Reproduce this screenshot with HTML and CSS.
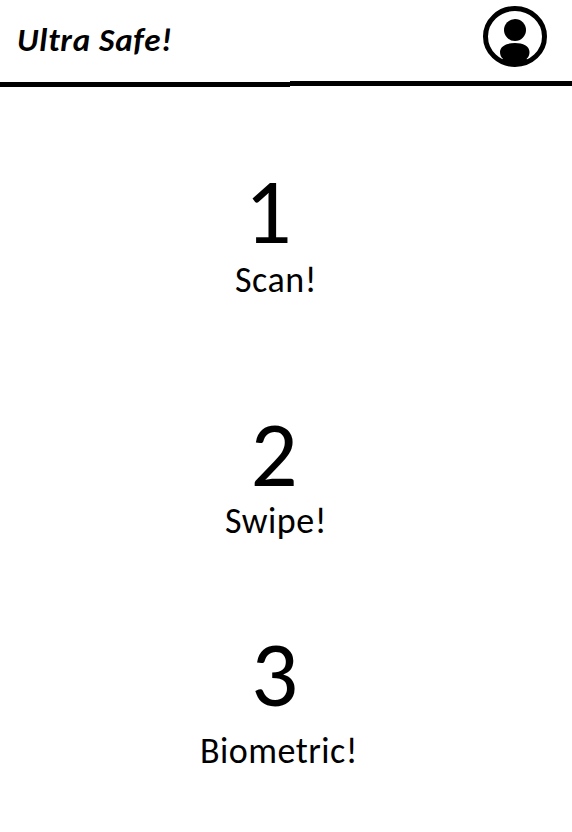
FILE: index.html
```html
<!DOCTYPE html>
<html lang="en">
<head>
<meta charset="utf-8">
<title>Ultra Safe!</title>
<link rel="stylesheet" href="styles.css">
</head>
<body>
<header class="header">
  <h1 class="brand">Ultra Safe!</h1>
  <svg class="avatar" viewBox="0 0 66 64" aria-hidden="true">
    <ellipse cx="33" cy="31.5" rx="29.5" ry="28" fill="none" stroke="#000" stroke-width="5"/>
    <circle cx="33" cy="25" r="11"/>
    <path d="M18 47C18 41 25 38 33 38S47.500 41 47.500 47C47.500 50 46.500 52 44.500 54L48 57L33 61L17 57L21 54C19 52 18 50 18 47Z"/>
  </svg>
</header>
<svg class="rule" viewBox="0 0 572 8" aria-hidden="true"><path d="M0 2H290V1H572V6H290V7H0Z"/></svg>
<main class="steps">
  <section class="step step-scan"><div class="number">1</div><div class="label">Scan!</div></section>
  <section class="step step-swipe"><div class="number">2</div><div class="label">Swipe!</div></section>
  <section class="step step-bio"><div class="number">3</div><div class="label">Biometric!</div></section>
</main>
</body>
</html>
```
FILE: styles.css
```css
* { box-sizing: border-box; }
body { margin: 0; height: 832px; overflow: hidden; background: #fff; color: #000; font-family: Carlito, Calibri, Lato, "Open Sans", sans-serif; }
.header { height: 80px; display: flex; justify-content: space-between; padding: 5px 24px 0 17px; }
.brand { margin: 15px 0 0; font-size: 33px; line-height: 40px; font-style: italic; font-weight: 700; letter-spacing: 0.75px; white-space: nowrap; }
.avatar { width: 66px; height: 64px; }
.rule { display: block; width: 572px; height: 8px; }
.step { text-align: center; }
.number { font-size: 93px; line-height: 92px; }
.label { font-size: 36px; line-height: 40px; letter-spacing: 0.5px; }
.step-scan { padding-top: 77px; padding-right: 20px; height: 244px; }
.step-scan .number { padding-right: 16px; }
.step-scan .label { margin-top: 3px; }
.step-swipe { padding-top: 76px; padding-right: 20px; height: 220px; }
.step-swipe .number { padding-right: 4px; }
.step-swipe .label { margin-top: 1px; }
.step-bio { padding-top: 76px; padding-right: 14px; }
.step-bio .number { padding-right: 9px; }
.step-bio .label { margin-top: 11px; }
```
